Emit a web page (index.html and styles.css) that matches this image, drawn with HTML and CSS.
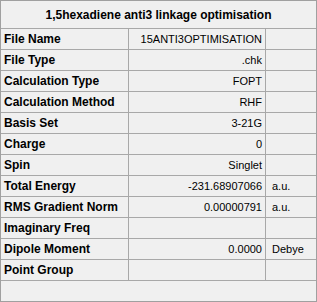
FILE: index.html
```html
<!DOCTYPE html>
<html>
<head>
<meta charset="utf-8">
<link rel="stylesheet" href="styles.css">
</head>
<body>
<div class="panel">
  <div class="title">1,5hexadiene anti3 linkage optimisation</div>
  <div class="grid">
    <div class="lbl">File Name</div><div class="val">15ANTI3OPTIMISATION</div><div class="unit"></div>
    <div class="lbl">File Type</div><div class="val">.chk</div><div class="unit"></div>
    <div class="lbl">Calculation Type</div><div class="val">FOPT</div><div class="unit"></div>
    <div class="lbl">Calculation Method</div><div class="val">RHF</div><div class="unit"></div>
    <div class="lbl">Basis Set</div><div class="val">3-21G</div><div class="unit"></div>
    <div class="lbl">Charge</div><div class="val">0</div><div class="unit"></div>
    <div class="lbl">Spin</div><div class="val">Singlet</div><div class="unit"></div>
    <div class="lbl">Total Energy</div><div class="val">-231.68907066</div><div class="unit">a.u.</div>
    <div class="lbl">RMS Gradient Norm</div><div class="val">0.00000791</div><div class="unit">a.u.</div>
    <div class="lbl">Imaginary Freq</div><div class="val"></div><div class="unit"></div>
    <div class="lbl">Dipole Moment</div><div class="val">0.0000</div><div class="unit">Debye</div>
    <div class="lbl">Point Group</div><div class="val"></div><div class="unit"></div>
  </div>
</div>
</body>
</html>
```
FILE: styles.css
```css
html, body {
  margin: 0;
  padding: 0;
  background: #f0f0f0;
}
.panel {
  box-sizing: border-box;
  width: 317px;
  height: 302px;
  border: 1px solid #a0a0a0;
  background: #f0f0f0;
  font-family: "Liberation Sans", Arial, sans-serif;
  color: #000;
}
.title {
  box-sizing: border-box;
  height: 28px;
  padding-top: 1px;
  border-bottom: 1px solid #a8a8a8;
  display: flex;
  align-items: center;
  justify-content: center;
  font-weight: bold;
  font-size: 12px;
}
.grid {
  display: grid;
  grid-template-columns: 128px 137px 50px;
  grid-auto-rows: 21px;
}
.grid > div {
  box-sizing: border-box;
  border-bottom: 1px solid #a8a8a8;
  display: flex;
  align-items: center;
  white-space: nowrap;
  overflow: hidden;
}
.lbl {
  border-right: 1px solid #a8a8a8;
  font-weight: bold;
  font-size: 12px;
  padding-left: 3px;
}
.val {
  border-right: 1px solid #a8a8a8;
  justify-content: flex-end;
  font-size: 11px;
  padding-right: 3px;
}
.unit {
  font-size: 11px;
  padding-left: 6px;
}
```
